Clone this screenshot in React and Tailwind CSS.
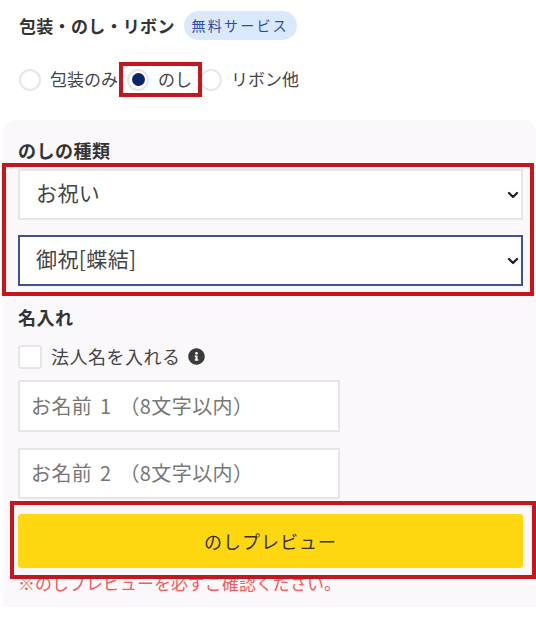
import React from "react";
import { ChevronDown } from "lucide-react";
import { FaInfoCircle } from "react-icons/fa";

const FONT = "[font-family:'Noto_Sans_CJK_JP','Noto_Sans',sans-serif]";

const Radio = ({ label, checked, className }) => (
  <label className={`flex items-center ${className}`}>
    <span className="flex h-[22px] w-[22px] shrink-0 items-center justify-center rounded-full border-2 border-[#e6e6e6] bg-white">
      {checked ? <span className="h-[13px] w-[13px] rounded-full bg-[#0a2468]" /> : null}
    </span>
    <span className="ml-[9px] pb-[1px] text-[17px] leading-6 text-[#444]">{label}</span>
  </label>
);

const Select = ({ value, focus, className }) => (
  <div className={`relative h-[51px] w-[505px] ${className}`}>
    <select
      defaultValue={value}
      className={`h-full w-full appearance-none rounded-none border-2 bg-white pb-[3px] pl-[16px] text-[21px] tracking-[0.4px] text-[#444] outline-none ${
        focus ? "border-[#3a5590]" : "border-[#e6e6e6]"
      }`}
    >
      <option>{value}</option>
    </select>
    <ChevronDown size={16} strokeWidth={3.4} className="absolute right-[2px] top-[18px] text-[#222]" />
  </div>
);

const NameInput = ({ placeholder, className }) => (
  <input
    placeholder={placeholder}
    className={`block w-[322px] border-2 border-[#e6e6e6] bg-white pb-[2px] pl-[11px] text-[20px] tracking-[0.4px] [word-spacing:3px] outline-none placeholder:text-[#777] ${className}`}
  />
);

const App = () => {
  return (
    <div className={`relative h-[635px] w-[536px] overflow-hidden bg-white ${FONT}`}>
      <div className="flex h-[62px] items-start pl-[19px] pt-[11px]">
        <span className="mt-[3px] text-[17px] font-bold leading-6 tracking-[0.3px] text-[#333]">包装・のし・リボン</span>
        <span className="ml-[9px] flex h-[29px] w-[113px] items-center justify-center rounded-full bg-[#d9e9fb] text-[14px] tracking-[2.2px] text-[#2c4bb0]">
          無料サービス
        </span>
      </div>

      <div className="flex h-[58px] items-start pl-[19px] pt-[5px]">
        <Radio label="包装のみ" />
        <Radio label="のし" checked className="ml-[9px]" />
        <Radio label="リボン他" className="ml-[8px]" />
      </div>

      <div className="ml-[3px] h-[487px] rounded-t-[12px] bg-[#faf8fa] pl-[15px] pt-[18px]">
        <h3 className="text-[18px] font-bold leading-6 tracking-[0.5px] text-[#333]">のしの種類</h3>
        <Select value="お祝い" className="mt-[7px]" />
        <Select value="御祝[蝶結]" focus className="mt-[15px]" />
        <h3 className="mt-[19px] text-[18px] font-bold leading-6 tracking-[0.5px] text-[#333]">名入れ</h3>
        <label className="mt-[16px] flex h-[24px] items-center">
          <span className="h-[24px] w-[24px] rounded-[3px] border-2 border-[#e6e6e6] bg-white" />
          <span className="ml-[9px] pb-[2px] text-[18px] leading-6 tracking-[0.5px] text-[#444]">法人名を入れる</span>
          <FaInfoCircle size={17} className="mb-[2px] ml-[7px] text-[#3a3a3a]" />
        </label>
        <NameInput placeholder="お名前 1 （8文字以内）" className="mt-[11px] h-[52px]" />
        <NameInput placeholder="お名前 2 （8文字以内）" className="mt-[16px] h-[51px]" />
        <button className="mt-[15px] h-[54px] w-[505px] rounded-[3px] bg-[#ffd710] text-[18px] tracking-[1px] text-[#333]">
          のしプレビュー
        </button>
        <p className="mt-[3px] text-[17px] leading-6 text-[#f55a5a]">※のしプレビューを必ずご確認ください。</p>
      </div>

      {/* red annotation frames */}
      <div className="absolute left-[119px] top-[62px] h-[35px] w-[83px] border-4 border-[#c4161c]" />
      <div className="absolute left-[2px] top-[163px] h-[133px] w-[532px] border-4 border-[#c4161c]" />
      <div className="absolute left-[10px] top-[501px] h-[78px] w-[526px] border-4 border-[#c4161c]" />
    </div>
  );
};

export default App;
